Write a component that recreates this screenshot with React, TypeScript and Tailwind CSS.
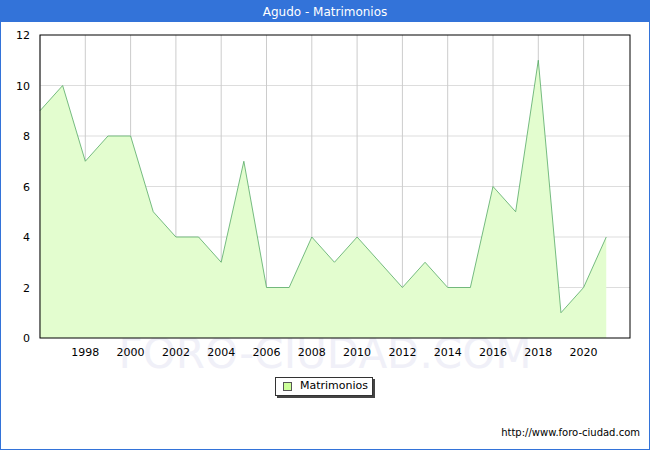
const data = [9, 10, 7, 8, 8, 5, 4, 4, 3, 7, 2, 2, 4, 3, 4, 3, 2, 3, 2, 2, 6, 5, 11, 1, 2, 4];
const X0 = 40;
const X1 = 630;
const Y0 = 338;
const Y1 = 35;
const step = 22.65;
const xOf = (i: number) => X0 + i * step;
const yOf = (v: number) => Y0 - (v * (Y0 - Y1)) / 12;

function Chart() {
  const pts = data.map((v, i) => `${xOf(i)},${yOf(v)}`).join(' ');
  const area = `${X0},${Y0} ${pts} ${xOf(data.length - 1)},${Y0}`;
  const years = [1998, 2000, 2002, 2004, 2006, 2008, 2010, 2012, 2014, 2016, 2018, 2020];
  return (
    <svg width="648" height="350" viewBox="1 22 648 350" className="block shrink-0">
      <text x="325" y="368" textAnchor="middle" fontSize="42" fill="#f0f0f8" fontFamily="Verdana, 'DejaVu Sans', sans-serif">
        FORO-CIUDAD.COM
      </text>
      {[2, 4, 6, 8, 10].map((v) => (
        <line key={v} x1={X0} x2={X1} y1={yOf(v)} y2={yOf(v)} stroke="#dddddd" />
      ))}
      {Array.from({ length: 13 }, (_, k) => X0 + 45.3 * k).map((x, k) => (
        <line key={k} x1={x} x2={x} y1={Y1} y2={Y0} stroke="#cccccc" />
      ))}
      <polygon points={area} fill="#e3fdcf" />
      <polyline points={pts} fill="none" stroke="#55aa66" strokeWidth="0.8" />
      <rect x={X0} y={Y1} width={X1 - X0} height={Y0 - Y1} fill="none" stroke="#000" />
      {[0, 2, 4, 6, 8, 10, 12].map((v) => (
        <text key={v} x="30" y={yOf(v) + 4} textAnchor="end" fontSize="11" fill="#000" fontFamily="'DejaVu Sans', sans-serif">
          {v}
        </text>
      ))}
      {years.map((y) => (
        <text key={y} x={xOf(y - 1996)} y="356" textAnchor="middle" fontSize="11" fill="#000" fontFamily="'DejaVu Sans', sans-serif">
          {y}
        </text>
      ))}
    </svg>
  );
}

export default function App() {
  return (
    <div className="w-[650px] h-[450px] border border-[#3373d9] flex flex-col bg-white overflow-hidden" style={{ fontFamily: "'DejaVu Sans', Verdana, sans-serif" }}>
      <div className="h-[21px] bg-[#3373d9] text-white text-[12px] flex items-center justify-center shrink-0">Agudo - Matrimonios</div>
      <Chart />
      <div className="flex justify-center mt-[5px] pr-[2px]">
        <div className="flex items-center gap-[8px] border border-[#333] bg-white h-[19px] px-[7px] w-[98px] shadow-[2px_2px_0_#444] text-[11px] text-black whitespace-nowrap">
          <span className="w-[9px] h-[9px] shrink-0 bg-[#ccff99] border border-[#555]"></span>
          Matrimonios
        </div>
      </div>
      <div className="mt-auto mb-[9px] pr-[9px] text-right text-[10px] text-black">http://www.foro-ciudad.com</div>
    </div>
  );
}
